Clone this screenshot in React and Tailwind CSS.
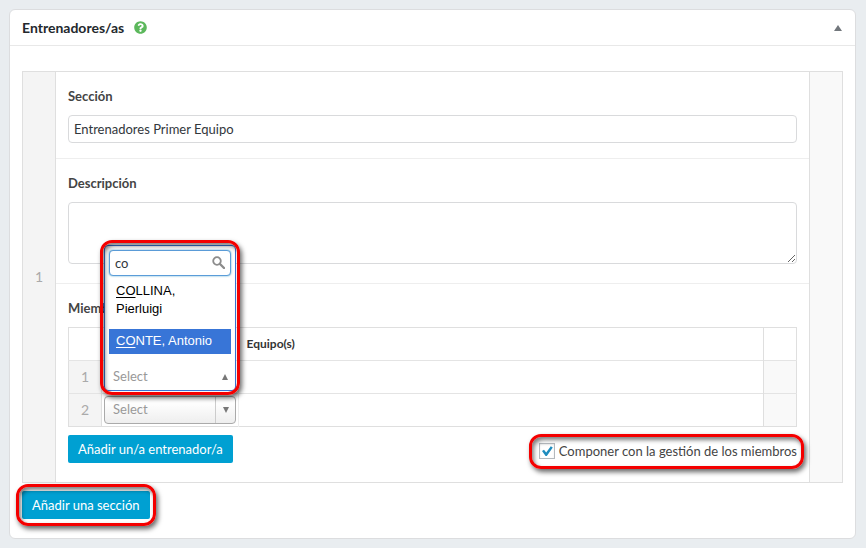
import { useState } from "react";
import { FaQuestionCircle } from "react-icons/fa";

const inputStyle =
  "block w-full border border-[#d9dadc] rounded bg-white px-[5px] text-[13px] text-[#32373c] focus:outline-none";
const buttonStyle =
  "h-7 rounded-xs bg-[#00a0d2] px-[10px] text-[13px] leading-[26px] text-white whitespace-nowrap";
const labelStyle =
  "block text-[13px] leading-6 font-bold text-[#444] mb-[7px]";

const coaches = [
  { id: 1, match: "CO", rest: "LLINA, Pierluigi" },
  { id: 2, match: "CO", rest: "NTE, Antonio" },
];

// Red outline drawn around the parts explained in the guide
const Highlight = ({ className }) => (
  <span
    className={`pointer-events-none absolute border-3 border-[#f40000] rounded-xl shadow-[2px_3px_5px_rgba(0,0,0,0.6),inset_2px_3px_4px_rgba(0,0,0,0.5)] ${className}`}
  ></span>
);

const Triangle = ({ up, className }) => (
  <svg viewBox="0 0 8 6" preserveAspectRatio="none" className={className}>
    <path d={up ? "M4 0 8 6H0Z" : "M0 0H8L4 6Z"} fill="currentColor" />
  </svg>
);

const CoachSelect = ({ label }) => (
  <div className="relative">
    <select
      aria-label={label}
      className="block h-7 w-full appearance-none rounded border border-[#aaa] bg-linear-to-b from-white from-20% to-[#eee] pl-2 text-[13px] text-[#999]"
    >
      <option>Select</option>
    </select>
    <span className="pointer-events-none absolute inset-y-px right-px flex w-5 items-center justify-center border-l border-[#ccc] text-[#777]">
      <Triangle className="w-[6px] h-[6px]" />
    </span>
  </div>
);

const CoachSelectOpen = () => {
  const [search, setSearch] = useState("co");

  return (
    <div className="relative h-7">
      <div className="absolute bottom-0 inset-x-0 z-10 rounded border border-[#3875d7] bg-white">
        <div className="relative mx-1 mt-1">
          <input
            type="text"
            aria-label="Buscar"
            value={search}
            onChange={(e) => setSearch(e.target.value)}
            className="block h-[26px] w-full rounded border border-[#5b9dd9] bg-white pl-[5px] pr-6 text-[13px] text-[#32373c] shadow-[0_0_2px_rgba(30,140,190,0.8)] focus:outline-none"
          />
          <svg
            viewBox="0 0 13 13"
            className="absolute right-[6px] top-[6px] w-[13px] h-[13px] text-[#8c8c8c]"
            fill="none"
            stroke="currentColor"
          >
            <circle cx="5" cy="5" r="3.8" strokeWidth="1.8" />
            <path d="M8 8l4 4" strokeWidth="2.4" strokeLinecap="round" />
          </svg>
        </div>
        <ul className="mx-1 font-['Liberation_Sans',sans-serif] text-[13px] leading-[18px]">
          {coaches.map((coach) => (
            <li
              key={coach.id}
              className={
                coach.id === 2
                  ? "bg-[#3875d7] text-white px-[7px] pt-[3px] pb-1"
                  : "text-black px-[7px] pt-[6px] pb-[11px]"
              }
            >
              <span className="underline underline-offset-2">
                {coach.match}
              </span>
              {coach.rest}
            </li>
          ))}
        </ul>
        <button
          type="button"
          className="mt-[10px] flex h-[26px] w-full items-center justify-between pl-2 pr-[7px] text-[13px] text-[#999]"
        >
          Select
          <Triangle up className="w-[6px] h-[6px] text-[#777]" />
        </button>
      </div>
      <Highlight className="z-20 -inset-x-1 -bottom-1 h-[155px]" />
    </div>
  );
};

const MembersTable = () => (
  <table className="w-full table-fixed border-collapse border border-[#dfdfdf]">
    <colgroup>
      <col className="w-[33px]" />
      <col className="w-[137px]" />
      <col />
      <col className="w-[33px]" />
    </colgroup>
    <thead>
      <tr className="h-[33px] text-left text-xs text-[#333]">
        <th></th>
        <th></th>
        <th className="pl-2">Equipo(s)</th>
        <th className="border-l border-[#dfdfdf]"></th>
      </tr>
    </thead>
    <tbody>
      {[1, 2].map((row) => (
        <tr key={row} className="h-[33px] border-t border-[#e4e4e4]">
          <td className="border-r border-[#dfdfdf] bg-[#f4f4f4] text-center text-sm text-[#aaa]">
            {row}
          </td>
          <td className="border-r border-[#ededed] p-0 px-[2px]">
            {row === 1 ? (
              <CoachSelectOpen />
            ) : (
              <CoachSelect label="Entrenador/a 2" />
            )}
          </td>
          <td></td>
          <td className="border-l border-[#dfdfdf] bg-[#f9f9f9]"></td>
        </tr>
      ))}
    </tbody>
  </table>
);

const App = () => {
  const [section, setSection] = useState("Entrenadores Primer Equipo");
  const [description, setDescription] = useState("");
  const [compose, setCompose] = useState(true);

  return (
    <div className="min-h-screen bg-[#e9edf0] p-[9px] pr-[10px] font-[Lato,sans-serif] text-[#444]">
      <div className="rounded-md border border-[#dcdddf] bg-white">
        {/* Header */}
        <div className="flex h-9 items-center border-b border-[#e8e8e8] px-3">
          <h2 className="text-sm font-bold text-[#23282d]">Entrenadores/as</h2>
          <FaQuestionCircle className="ml-[10px] text-[13px] text-[#5cb85c]" />
          <button type="button" aria-label="Plegar" className="ml-auto p-[1px]">
            <Triangle up className="w-2 h-[6px] text-[#72777c]" />
          </button>
        </div>

        <div className="px-3 pt-[25px] pb-[19px]">
          {/* Repeater row */}
          <div className="flex border border-[#dfdfdf]">
            <div className="flex w-[33px] shrink-0 items-center justify-center border-r border-[#dfdfdf] bg-[#f4f4f4] text-sm text-[#aaa]">
              1
            </div>

            <div className="flex-1 min-w-0">
              <div className="border-b border-[#eee] px-3 pt-3 pb-[15px]">
                <label htmlFor="section" className={labelStyle}>
                  Sección
                </label>
                <input
                  id="section"
                  type="text"
                  value={section}
                  onChange={(e) => setSection(e.target.value)}
                  className={`h-7 ${inputStyle}`}
                />
              </div>

              <div className="border-b border-[#eee] px-3 pt-3 pb-[19px]">
                <label htmlFor="description" className={labelStyle}>
                  Descripción
                </label>
                <textarea
                  id="description"
                  value={description}
                  onChange={(e) => setDescription(e.target.value)}
                  className={`h-[62px] resize-y ${inputStyle}`}
                />
              </div>

              <div className="px-3 pt-3 pb-[19px]">
                <div className={labelStyle}>Miembros</div>
                <MembersTable />
                <div className="mt-2 flex items-center justify-between">
                  <button type="button" className={buttonStyle}>
                    Añadir un/a entrenador/a
                  </button>
                  <div className="relative mt-1 flex items-center gap-1">
                    <input
                      id="compose"
                      type="checkbox"
                      checked={compose}
                      onChange={(e) => setCompose(e.target.checked)}
                      className="peer h-4 w-4 appearance-none border border-[#b4b9be] bg-white shadow-[inset_0_1px_2px_rgba(0,0,0,0.1)]"
                    />
                    <svg
                      viewBox="0 0 16 16"
                      className="pointer-events-none invisible absolute left-0 w-4 h-4 peer-checked:visible"
                    >
                      <path
                        d="M3 8 5 6.8 7.2 9.4 11.8 3.2 13.8 4.4 7.8 13H6.6Z"
                        fill="#1e8cbe"
                      />
                    </svg>
                    <label htmlFor="compose" className="text-[13px] leading-5">
                      Componer con la gestión de los miembros
                    </label>
                    <Highlight className="-left-[10px] -right-[7px] -top-[7px] -bottom-[8px]" />
                  </div>
                </div>
              </div>
            </div>

            <div className="w-[33px] shrink-0 border-l border-[#dfdfdf] bg-[#f9f9f9]"></div>
          </div>

          <div className="relative mt-2 w-fit">
            <button type="button" className={`block ${buttonStyle}`}>
              Añadir una sección
            </button>
            <Highlight className="-inset-x-[6px] -inset-y-[7px]" />
          </div>
        </div>
      </div>
    </div>
  );
};

export default App;
